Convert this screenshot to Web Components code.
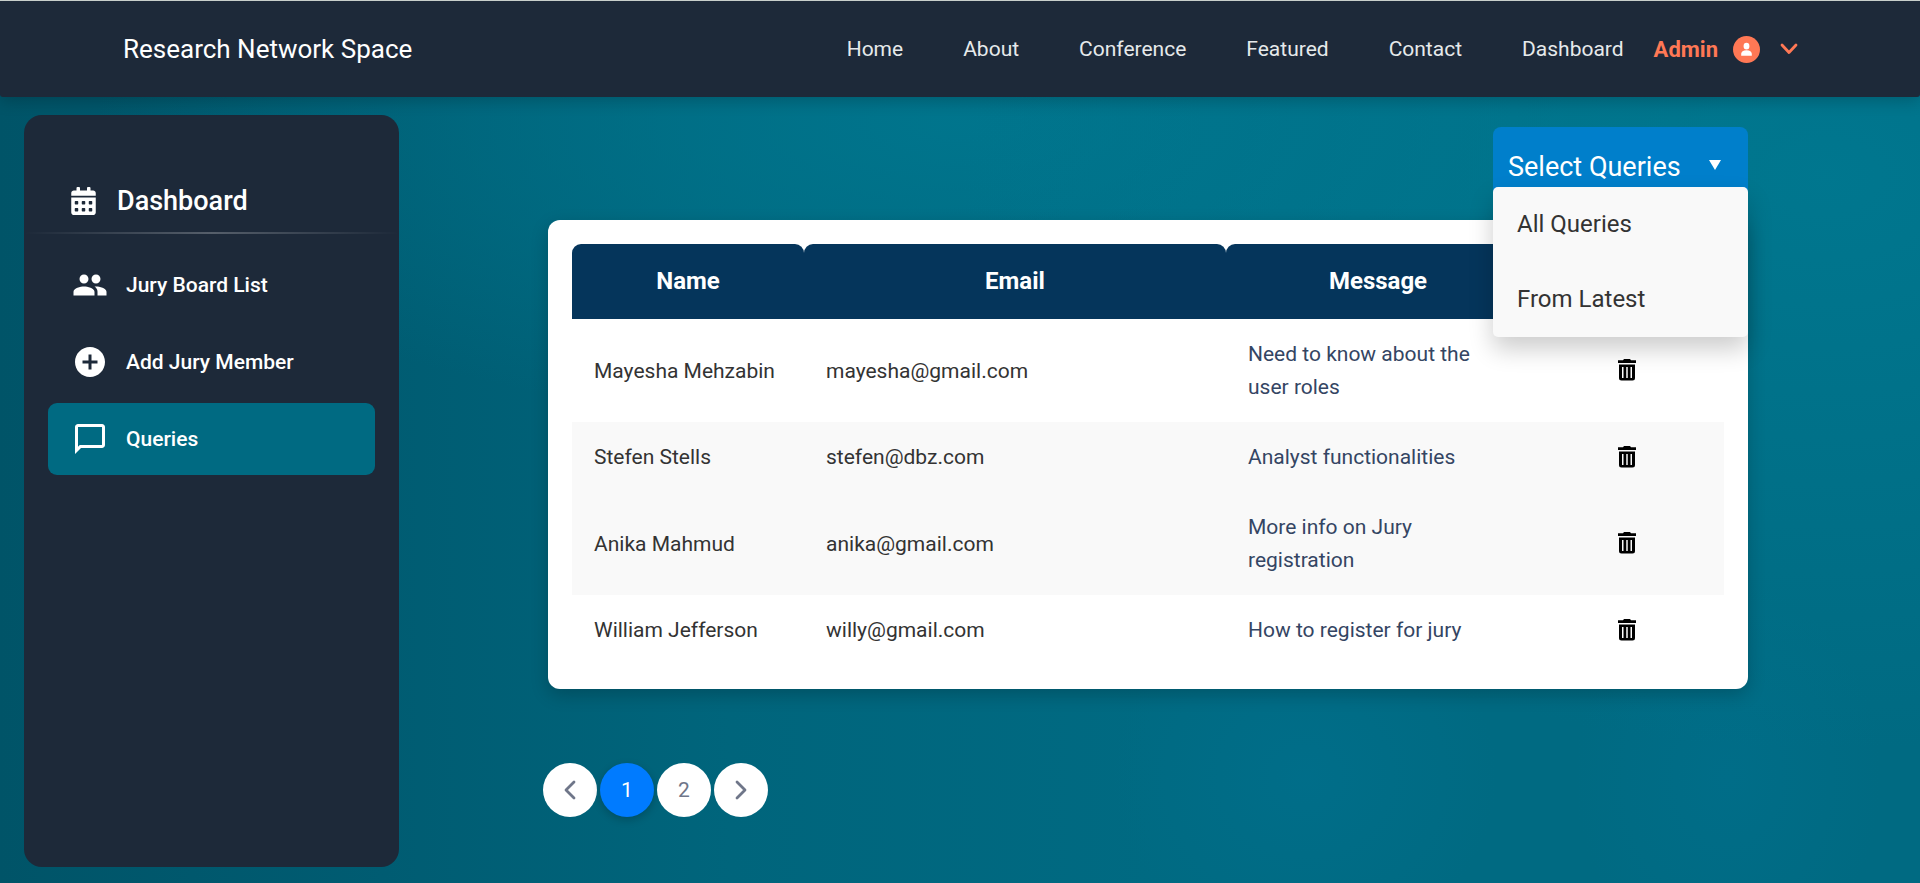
<!DOCTYPE html>
<html lang="en">
<head>
<meta charset="utf-8">
<meta name="viewport" content="width=device-width, initial-scale=1">
<title>Research Network Space</title>
<style>
  html, body { margin: 0; }
  body {
    font-family: Roboto, "Liberation Sans", sans-serif;
    font-size: 21px;
    color: #333;
    min-height: 100vh;
    background:
      radial-gradient(ellipse 45% 65% at 95% 20%, rgba(0, 122, 146, .8), rgba(0, 122, 146, 0)),
      radial-gradient(ellipse 45% 35% at 50% 14%, rgba(0, 120, 144, .8), rgba(0, 120, 144, 0)),
      radial-gradient(ellipse 10% 20% at 68% 88%, rgba(0, 112, 142, .6), rgba(0, 112, 142, 0)),
      radial-gradient(ellipse 8% 22% at 90% 88%, rgba(0, 112, 142, .5), rgba(0, 112, 142, 0)),
      linear-gradient(90deg, #005468 0%, #005c72 20%, #00657c 38%, #006a82 60%, #006a82 100%);
  }
</style>
</head>
<body>
<rns-app></rns-app>

<script>
const ICONS = {
  calendar: '<svg viewBox="0 0 448 512" fill="currentColor"><path d="M0 464c0 26.500 21.500 48 48 48h352c26.500 0 48-21.500 48-48V192H0v272zm320-196c0-6.600 5.400-12 12-12h40c6.600 0 12 5.400 12 12v40c0 6.600-5.400 12-12 12h-40c-6.600 0-12-5.400-12-12v-40zm0 128c0-6.600 5.400-12 12-12h40c6.600 0 12 5.400 12 12v40c0 6.600-5.400 12-12 12h-40c-6.600 0-12-5.400-12-12v-40zM192 268c0-6.600 5.400-12 12-12h40c6.600 0 12 5.400 12 12v40c0 6.600-5.400 12-12 12h-40c-6.600 0-12-5.400-12-12v-40zm0 128c0-6.600 5.400-12 12-12h40c6.600 0 12 5.400 12 12v40c0 6.600-5.400 12-12 12h-40c-6.600 0-12-5.400-12-12v-40zM64 268c0-6.600 5.400-12 12-12h40c6.600 0 12 5.400 12 12v40c0 6.600-5.400 12-12 12H76c-6.600 0-12-5.400-12-12v-40zm0 128c0-6.600 5.400-12 12-12h40c6.600 0 12 5.400 12 12v40c0 6.600-5.400 12-12 12H76c-6.600 0-12-5.400-12-12v-40zM400 64h-48V16c0-8.800-7.200-16-16-16h-32c-8.800 0-16 7.200-16 16v48H160V16c0-8.800-7.200-16-16-16h-32c-8.800 0-16 7.200-16 16v48H48C21.500 64 0 85.500 0 112v48h448v-48c0-26.500-21.500-48-48-48z"/></svg>',
  people: '<svg viewBox="0 0 24 24" fill="currentColor"><path d="M16 11c1.660 0 2.990-1.340 2.990-3S17.660 5 16 5c-1.660 0-3 1.340-3 3s1.340 3 3 3zm-8 0c1.660 0 2.990-1.340 2.990-3S9.660 5 8 5C6.340 5 5 6.340 5 8s1.340 3 3 3zm0 2c-2.330 0-7 1.170-7 3.500V19h14v-2.500c0-2.330-4.670-3.500-7-3.500zm8 0c-.29 0-.62.02-.97.05 1.160.84 1.970 1.970 1.970 3.450V19h6v-2.500c0-2.330-4.670-3.500-7-3.500z"/></svg>',
  add: '<svg viewBox="0 0 24 24" fill="currentColor"><path d="M12 2C6.480 2 2 6.480 2 12s4.480 10 10 10 10-4.480 10-10S17.520 2 12 2zm5 11h-4v4h-2v-4H7v-2h4V7h2v4h4v2z"/></svg>',
  chat: '<svg viewBox="0 0 24 24" fill="currentColor"><path d="M20 2H4c-1.100 0-2 .9-2 2v18l4-4h14c1.100 0 2-.9 2-2V4c0-1.100-.9-2-2-2zm0 14H5.200L4 17.200V4h16v12z"/></svg>',
  user: '<svg viewBox="0 0 28 28"><circle cx="14" cy="14" r="14" fill="currentColor"/><rect x="11" y="7" width="6" height="7" rx="3" fill="#fff"/><path d="M8.500 20.500v-2c0-2 2-3.700 5.500-3.700s5.500 1.700 5.500 3.700v2z" fill="#fff"/></svg>',
  down: '<svg viewBox="0 0 18 12" fill="none" stroke="currentColor" stroke-width="2.800" stroke-linecap="round" stroke-linejoin="round"><path d="M2 2l7 7.500L16 2"/></svg>',
  left: '<svg viewBox="0 0 12 20" fill="none" stroke="currentColor" stroke-width="2.800" stroke-linecap="round" stroke-linejoin="round"><path d="M10 2L2 10l8 8"/></svg>',
  right: '<svg viewBox="0 0 12 20" fill="none" stroke="currentColor" stroke-width="2.800" stroke-linecap="round" stroke-linejoin="round"><path d="M2 2l8 8-8 8"/></svg>',
  trash: '<svg viewBox="0 0 18 22" fill="currentColor"><path fill-rule="evenodd" d="M6 0h6l1 1.200h5V4H0V1.200h5zM1 5.500h16V19a2.500 2.500 0 0 1-2.500 2.500h-11A2.500 2.500 0 0 1 1 19zM4 8v11h1.500V8zM8.250 8v11h1.500V8zM12.500 8v11H14V8z"/></svg>'
};

function define(name, html) {
  const template = document.createElement('template');
  template.innerHTML = html;
  customElements.define(name, class extends HTMLElement {
    constructor() {
      super();
      this.attachShadow({ mode: 'open' }).append(template.content.cloneNode(true));
    }
  });
}

customElements.define('rns-icon', class extends HTMLElement {
  connectedCallback() {
    if (this.shadowRoot) return;
    this.attachShadow({ mode: 'open' }).innerHTML =
      '<style>:host{display:inline-flex;flex:none} svg{display:block;width:100%;height:100%}</style>' +
      ICONS[this.getAttribute('name')].replace('<svg', '<svg aria-hidden="true"');
  }
});

define('rns-navbar', `
  <style>
    :host { display: block; border-top: 1px solid #c8cfcb; background: #1d2939; border-radius: 0 0 3px 3px; box-shadow: 0 4px 16px rgba(0, 0, 0, .2); position: relative; }
    nav { display: flex; align-items: center; justify-content: space-between; height: 96px; padding: 0 122px 0 123px; }
    a { color: inherit; text-decoration: none; }
    .brand { color: #fff; font-size: 26px; }
    .links { display: flex; align-items: center; gap: 60px; color: #e6e9eb; }
    .last { display: flex; align-items: center; gap: 30px; }
    button { display: flex; align-items: center; gap: 15px; border: 0; padding: 0; background: none; color: #ff7855; font: 700 22px Roboto, sans-serif; cursor: pointer; }
    .user { width: 27px; height: 27px; }
    .down { width: 18px; height: 12px; margin: 0 0 0 5px; }
  </style>
  <nav>
    <a class="brand" href="#">Research Network Space</a>
    <div class="links">
      <a href="#">Home</a><a href="#">About</a><a href="#">Conference</a><a href="#">Featured</a><a href="#">Contact</a>
      <div class="last">
        <a href="#">Dashboard</a>
        <button type="button">Admin <rns-icon class="user" name="user"></rns-icon><rns-icon class="down" name="down"></rns-icon></button>
      </div>
    </div>
  </nav>`);

define('rns-side-item', `
  <style>
    :host { display: block; }
    a { display: flex; align-items: center; gap: 18px; height: 72px; box-sizing: border-box; padding: 0 24px; border-radius: 9px; color: #fff; font-weight: 500; text-decoration: none; }
    :host([active]) a { background: #006a82; }
  </style>
  <a href="#"><slot name="icon"></slot><slot></slot></a>`);

define('rns-sidebar', `
  <style>
    :host { display: block; box-sizing: border-box; background: #1d2939; border-radius: 18px; padding-top: 54px; }
    h2 { display: flex; align-items: center; gap: 21px; height: 63px; margin: 0; padding: 0 47px; color: #fff; font-size: 27px; font-weight: 500; }
    h2 rns-icon { width: 25px; height: 28px; }
    hr { height: 2px; margin: 0; border: 0; background: linear-gradient(90deg, rgba(255,255,255,0), rgba(255,255,255,.25), rgba(255,255,255,0)); }
    nav { display: grid; gap: 5px; padding: 15px 24px; }
    nav rns-icon { width: 36px; height: 36px; }
  </style>
  <h2><rns-icon name="calendar"></rns-icon>Dashboard</h2>
  <hr>
  <nav>
    <rns-side-item><rns-icon slot="icon" name="people"></rns-icon>Jury Board List</rns-side-item>
    <rns-side-item><rns-icon slot="icon" name="add"></rns-icon>Add Jury Member</rns-side-item>
    <rns-side-item active><rns-icon slot="icon" name="chat"></rns-icon>Queries</rns-side-item>
  </nav>`);

define('rns-query-filter', `
  <style>
    :host { display: block; position: relative; z-index: 2; width: 255px; }
    button { display: flex; align-items: center; justify-content: space-between; width: 100%; height: 75px; padding: 5px 27px 0 15px; border: 0; border-radius: 8px; background: #007fcb; color: #fff; font: 27px Roboto, sans-serif; cursor: pointer; }
    i { border: 6px solid transparent; border-top: 10px solid #fff; border-bottom: 0; margin-bottom: 4px; }
    ul { position: absolute; top: 60px; left: 0; width: 100%; margin: 0; padding: 0; list-style: none; background: #f9f9f9; border-radius: 5px; box-shadow: 0 12px 24px rgba(0, 0, 0, .2); }
    li a { display: block; padding: 19px 24px 20px; color: #333; font-size: 24px; line-height: 36px; text-decoration: none; }
  </style>
  <button type="button" aria-haspopup="true" aria-expanded="true">Select Queries<i></i></button>
  <ul>
    <li><a href="#">All Queries</a></li>
    <li><a href="#">From Latest</a></li>
  </ul>`);

customElements.define('rns-query-table', class extends HTMLElement {
  connectedCallback() {
    if (this.shadowRoot) return;
    const rows = [
      ['Mayesha Mehzabin', 'mayesha@gmail.com', 'Need to know about the user roles', false],
      ['Stefen Stells', 'stefen@dbz.com', 'Analyst functionalities', true],
      ['Anika Mahmud', 'anika@gmail.com', 'More info on Jury registration', true],
      ['William Jefferson', 'willy@gmail.com', 'How to register for jury', false]
    ];
    this.attachShadow({ mode: 'open' }).innerHTML = `
      <style>
        :host { display: block; padding: 24px; background: #fff; border-radius: 12px; box-shadow: 0 6px 18px rgba(0, 0, 0, .2); }
        table { width: 100%; border-collapse: separate; border-spacing: 0; table-layout: fixed; }
        th { height: 73px; padding: 0 0 2px; background: #05355b; border-radius: 9px 9px 0 0; color: #fff; font-size: 24px; font-weight: 700; }
        .name { width: 232px; }
        .email { width: 422px; }
        .message { width: 304px; }
        td { padding: 19px 22px 18px; line-height: 33px; }
        .shade { background: #f9f9f9; }
        .text { padding-right: 36px; color: #344563; }
        .action { text-align: center; padding: 0; }
        button { display: inline-flex; vertical-align: middle; padding: 0 0 2px; border: 0; background: none; color: #000; cursor: pointer; }
        rns-icon { width: 18px; height: 22px; }
      </style>
      <table>
        <thead><tr><th class="name" scope="col">Name</th><th class="email" scope="col">Email</th><th class="message" scope="col">Message</th><th scope="col" aria-label="Delete"></th></tr></thead>
        <tbody>${rows.map(([n, e, m, s]) => `<tr${s ? ' class="shade"' : ''}><td>${n}</td><td>${e}</td><td class="text">${m}</td><td class="action"><button type="button" aria-label="Delete ${n}"><rns-icon name="trash"></rns-icon></button></td></tr>`).join('')}</tbody>
      </table>`;
  }
});

define('rns-pagination', `
  <style>
    :host { display: block; }
    nav { display: flex; gap: 3px; }
    button { display: flex; align-items: center; justify-content: center; width: 54px; height: 54px; padding: 0; border: 0; border-radius: 50%; background: #fff; color: #6f7689; font: 21px Roboto, sans-serif; cursor: pointer; }
    button[aria-current] { background: #007bff; color: #fff; box-shadow: 0 3px 8px rgba(0, 0, 0, .2); }
    rns-icon { width: 12px; height: 20px; }
  </style>
  <nav aria-label="Pages">
    <button type="button" aria-label="Previous"><rns-icon name="left"></rns-icon></button>
    <button type="button" aria-current="page">1</button>
    <button type="button">2</button>
    <button type="button" aria-label="Next"><rns-icon name="right"></rns-icon></button>
  </nav>`);

define('rns-app', `
  <style>
    :host { display: flex; flex-direction: column; min-height: 100vh; }
    .body { flex: 1; display: flex; padding: 18px 24px 16px; }
    rns-sidebar { flex: none; width: 375px; }
    main { flex: 1; display: flex; flex-direction: column; padding: 12px 148px 0 144px; }
    rns-query-filter { align-self: flex-end; margin-bottom: 18px; }
    rns-query-table { margin: 0 0 74px 5px; }
  </style>
  <rns-navbar></rns-navbar>
  <div class="body">
    <rns-sidebar></rns-sidebar>
    <main>
      <rns-query-filter></rns-query-filter>
      <rns-query-table></rns-query-table>
      <rns-pagination></rns-pagination>
    </main>
  </div>`);
</script>
</body>
</html>
